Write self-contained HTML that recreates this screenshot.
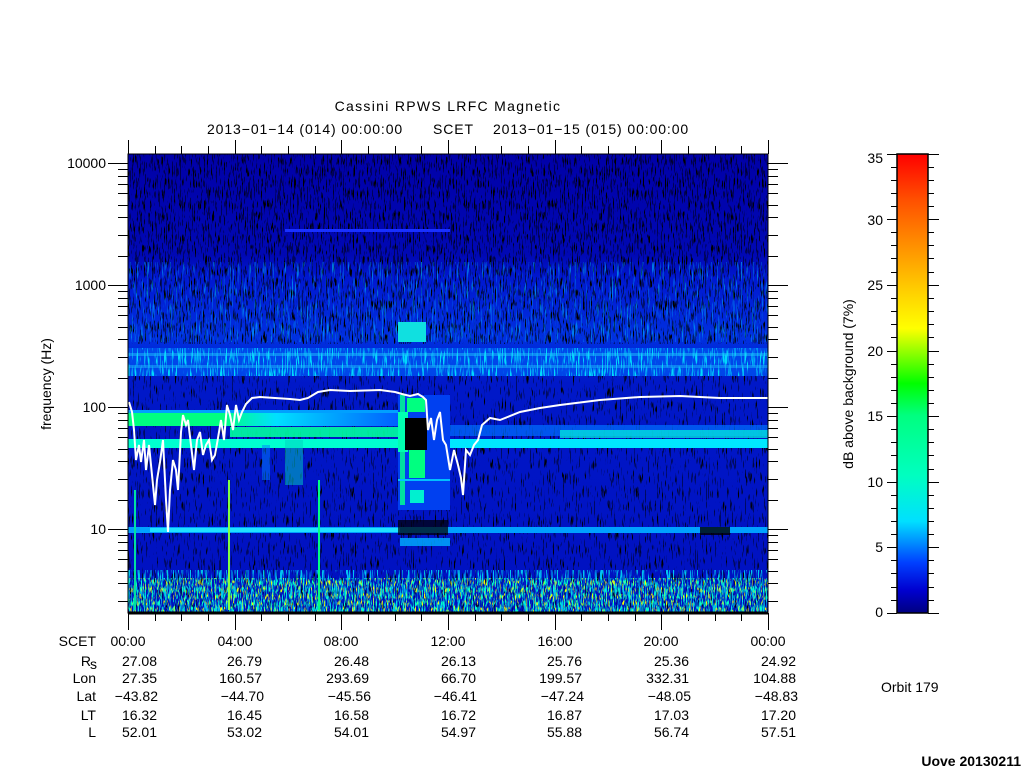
<!DOCTYPE html>
<html><head><meta charset="utf-8"><style>
html,body{margin:0;padding:0;background:#fff;width:1024px;height:768px;overflow:hidden}
svg{display:block}
text{font-family:"Liberation Sans","DejaVu Sans",sans-serif;font-size:14px;fill:#000}
</style></head><body>
<svg width="1024" height="768" viewBox="0 0 1024 768" xmlns="http://www.w3.org/2000/svg">
<defs>
<filter id="blk" x="0" y="0" width="100%" height="100%">
<feTurbulence type="fractalNoise" baseFrequency="0.9 0.09" numOctaves="2" seed="3"/>
<feColorMatrix type="matrix" values="0 0 0 0 0  0 0 0 0 0  0 0 0 0 0  9 0 0 0 -5.1"/>
</filter>
<filter id="blk2" x="0" y="0" width="100%" height="100%">
<feTurbulence type="fractalNoise" baseFrequency="0.9 0.07" numOctaves="2" seed="11"/>
<feColorMatrix type="matrix" values="0 0 0 0 0  0 0 0 0 0  0 0 0 0 0  9 0 0 0 -5.6"/>
</filter>
<filter id="cy" x="0" y="0" width="100%" height="100%">
<feTurbulence type="fractalNoise" baseFrequency="0.8 0.06" numOctaves="2" seed="5"/>
<feColorMatrix type="matrix" values="0 0 0 0 0  0 0 0 0 0.9  0 0 0 0 1  8 0 0 0 -4.3"/>
</filter>
<filter id="cy2" x="0" y="0" width="100%" height="100%">
<feTurbulence type="fractalNoise" baseFrequency="0.8 0.05" numOctaves="2" seed="9"/>
<feColorMatrix type="matrix" values="0 0 0 0 0  0 0 0 0 0.5  0 0 0 0 1  8 0 0 0 -4.8"/>
</filter>
<filter id="yl" x="0" y="0" width="100%" height="100%">
<feTurbulence type="fractalNoise" baseFrequency="0.9 0.15" numOctaves="2" seed="8"/>
<feColorMatrix type="matrix" values="0 0 0 0 0.9  0 0 0 0 1  0 0 0 0 0  9 0 0 0 -5.5"/>
</filter>
<filter id="gr" x="0" y="0" width="100%" height="100%">
<feTurbulence type="fractalNoise" baseFrequency="0.9 0.15" numOctaves="2" seed="21"/>
<feColorMatrix type="matrix" values="0 0 0 0 0  0 0 0 0 1  0 0 0 0 0.6  7 0 0 0 -3.6"/>
</filter>
<linearGradient id="bg" x1="0" y1="0" x2="0" y2="1">
<stop offset="0" stop-color="#0000a8"/>
<stop offset="0.22" stop-color="#0008b4"/>
<stop offset="0.27" stop-color="#0018d0"/>
<stop offset="0.40" stop-color="#0030e0"/>
<stop offset="0.50" stop-color="#0018c8"/>
<stop offset="1" stop-color="#0010c0"/>
</linearGradient>
<linearGradient id="cb" x1="0" y1="1" x2="0" y2="0">
<stop offset="0" stop-color="#000080"/>
<stop offset="0.05" stop-color="#0000d0"/>
<stop offset="0.11" stop-color="#0040ff"/>
<stop offset="0.2" stop-color="#00e0ff"/>
<stop offset="0.3" stop-color="#00ffc0"/>
<stop offset="0.43" stop-color="#00ff80"/>
<stop offset="0.5" stop-color="#00ff00"/>
<stop offset="0.62" stop-color="#ffff00"/>
<stop offset="0.7" stop-color="#ffd000"/>
<stop offset="0.8" stop-color="#ff9000"/>
<stop offset="0.9" stop-color="#ff5000"/>
<stop offset="1" stop-color="#ff0000"/>
</linearGradient>
<linearGradient id="fadeG" x1="0" y1="0" x2="1" y2="0">
<stop offset="0" stop-color="#00ff80"/>
<stop offset="0.35" stop-color="#00ff80"/>
<stop offset="0.55" stop-color="#00e0ff"/>
<stop offset="1" stop-color="#0060ff"/>
</linearGradient>
</defs>

<rect x="128" y="154" width="640" height="459" fill="url(#bg)"/>
<rect x="128" y="154" width="640" height="190" filter="url(#blk)"/>
<rect x="128" y="262" width="640" height="80" filter="url(#cy2)" opacity="0.6"/>
<rect x="285" y="229" width="165" height="3" fill="#1830ff"/>
<rect x="128" y="348" width="640" height="28" fill="#0050f0" opacity="0.8"/>
<rect x="128" y="348" width="640" height="28" filter="url(#cy)" opacity="0.85"/>
<rect x="128" y="353" width="640" height="3" fill="#20d0ff" opacity="0.45"/>
<rect x="128" y="365" width="640" height="3" fill="#20d0ff" opacity="0.4"/>
<rect x="398" y="322" width="28" height="20" fill="#10e0e0"/>
<rect x="128" y="376" width="640" height="237" filter="url(#blk2)"/>
<rect x="128" y="412" width="270" height="14" fill="url(#fadeG)"/>
<rect x="128" y="410" width="270" height="3" fill="#00a0ff"/>
<rect x="230" y="427" width="170" height="10" fill="#00ffa0" opacity="0.9"/>
<rect x="450" y="425" width="318" height="11" fill="#0070ff" opacity="0.7"/>
<rect x="128" y="439" width="270" height="9" fill="#00ffd0"/>
<rect x="450" y="439" width="318" height="9" fill="#00e8ff"/>
<rect x="560" y="430" width="208" height="8" fill="#00e0e0" opacity="0.8"/>
<rect x="285" y="440" width="18" height="45" fill="#00d0c0" opacity="0.5"/>
<rect x="262" y="445" width="8" height="35" fill="#0080ff" opacity="0.5"/>
<rect x="398" y="395" width="52" height="115" fill="#0040f0"/>
<rect x="400" y="395" width="5" height="110" fill="#00e0a0"/>
<rect x="407" y="398" width="18" height="14" fill="#00ff80"/>
<rect x="398" y="412" width="10" height="40" fill="#00ffb0"/>
<rect x="405" y="418" width="22" height="32" fill="#000"/>
<rect x="409" y="450" width="16" height="28" fill="#00ff80"/>
<rect x="398" y="479" width="52" height="2" fill="#00c0ff"/>
<rect x="410" y="490" width="14" height="13" fill="#00f0d0"/>
<rect x="128" y="527" width="640" height="6" fill="#00a0ff"/>
<rect x="150" y="528" width="250" height="4" fill="#20e0ff"/>
<rect x="398" y="520" width="50" height="15" fill="#000" opacity="0.7"/>
<rect x="400" y="538" width="50" height="8" fill="#00b0ff" opacity="0.8"/>
<rect x="700" y="527" width="30" height="8" fill="#000" opacity="0.8"/>
<rect x="128" y="570" width="640" height="43" filter="url(#cy)" opacity="0.8"/>
<rect x="128" y="578" width="640" height="35" filter="url(#gr)"/>
<rect x="128" y="578" width="640" height="35" filter="url(#yl)"/>
<rect x="318" y="480" width="2" height="130" fill="#00ff80"/>
<rect x="228" y="480" width="2" height="130" fill="#80ff40"/>
<rect x="134" y="490" width="2" height="120" fill="#00e0a0"/>

<polyline fill="none" stroke="#fff" stroke-width="2" points="129,402 132,412 134,430 136,460 139,445 141,462 144,440 146,470 149,445 152,475 155,505 157,480 160,462 163,440 166,500 168,532 170,490 173,460 176,470 178,490 181,432 183,415 186,425 188,420 191,445 194,470 197,440 200,432 203,455 206,445 209,440 212,460 215,455 218,438 221,420 224,440 227,405 230,415 233,430 236,405 239,420 242,412 246,404 252,398 260,397 275,398 290,399 300,400 308,398 318,392 330,390 350,391 380,390 395,392 402,394 410,396 418,394 423,397 426,400 428,430 431,418 434,440 437,420 440,412 443,440 446,445 450,470 454,450 458,465 461,478 463,495 466,450 470,455 474,445 478,440 482,425 490,418 500,420 520,412 540,408 560,405 600,400 640,397 680,396 720,398 768,398"/>

<rect x="128" y="154" width="640" height="459" fill="none" stroke="#000" stroke-width="1"/>
<line x1="128" y1="613" x2="768" y2="613" stroke="#000" stroke-width="3"/>
<g stroke="#000" stroke-width="1">
<path d="M128.5 140v14M235.5 140v14M341.5 140v14M448.5 140v14M555.5 140v14M661.5 140v14M768.5 140v14
M128.5 613v17M235.5 613v17M341.5 613v17M448.5 613v17M555.5 613v17M661.5 613v17M768.5 613v17
M155.5 146v8M181.5 146v8M208.5 146v8M261.5 146v8M288.5 146v8M315.5 146v8M368.5 146v8M395.5 146v8M421.5 146v8M475.5 146v8M501.5 146v8M528.5 146v8M581.5 146v8M608.5 146v8M635.5 146v8M688.5 146v8M715.5 146v8M741.5 146v8
M155.5 613v8M181.5 613v8M208.5 613v8M261.5 613v8M288.5 613v8M315.5 613v8M368.5 613v8M395.5 613v8M421.5 613v8M475.5 613v8M501.5 613v8M528.5 613v8M581.5 613v8M608.5 613v8M635.5 613v8M688.5 613v8M715.5 613v8M741.5 613v8"/>
<path d="M108 163.5h20M108 285.5h20M108 407.5h20M108 529.5h20M768 163.5h20M768 285.5h20M768 407.5h20M768 529.5h20
M118 169.5h10M118 176.5h10M118 184.5h10M118 193.5h10M118 205.5h10M118 217.5h10M118 235.5h10M118 256.5h10
M118 291.5h10M118 298.5h10M118 306.5h10M118 315.5h10M118 327.5h10M118 339.5h10M118 357.5h10M118 378.5h10
M118 413.5h10M118 420.5h10M118 428.5h10M118 437.5h10M118 449.5h10M118 461.5h10M118 479.5h10M118 500.5h10
M118 535.5h10M118 542.5h10M118 550.5h10M118 559.5h10M118 571.5h10M118 583.5h10M118 601.5h10
M768 169.5h10M768 176.5h10M768 184.5h10M768 193.5h10M768 205.5h10M768 217.5h10M768 235.5h10M768 256.5h10
M768 291.5h10M768 298.5h10M768 306.5h10M768 315.5h10M768 327.5h10M768 339.5h10M768 357.5h10M768 378.5h10
M768 413.5h10M768 420.5h10M768 428.5h10M768 437.5h10M768 449.5h10M768 461.5h10M768 479.5h10M768 500.5h10
M768 535.5h10M768 542.5h10M768 550.5h10M768 559.5h10M768 571.5h10M768 583.5h10M768 601.5h10"/>
</g>

<text x="448" y="111" text-anchor="middle" font-size="17" letter-spacing="1.3">Cassini RPWS LRFC Magnetic</text>
<text x="207" y="134" letter-spacing="0.9">2013−01−14 (014) 00:00:00</text>
<text x="433" y="134" letter-spacing="0.9">SCET</text>
<text x="493" y="134" letter-spacing="0.9">2013−01−15 (015) 00:00:00</text>
<g text-anchor="end">
<text x="106" y="168">10000</text>
<text x="106" y="290">1000</text>
<text x="106" y="412">100</text>
<text x="106" y="534">10</text>
</g>
<text transform="translate(51,384) rotate(-90)" text-anchor="middle">frequency (Hz)</text>

<g text-anchor="end">
<text x="96" y="646">SCET</text>
<text x="91" y="666">R</text><text x="97" y="669" font-size="9">s</text>
<text x="96" y="683">Lon</text>
<text x="96" y="701">Lat</text>
<text x="96" y="720">LT</text>
<text x="96" y="737">L</text>
</g>
<g text-anchor="middle">
<text x="128" y="646">00:00</text><text x="235" y="646">04:00</text><text x="341" y="646">08:00</text><text x="448" y="646">12:00</text><text x="555" y="646">16:00</text><text x="661" y="646">20:00</text><text x="768" y="646">00:00</text>
</g>
<g text-anchor="end">
<text x="157" y="666">27.08</text><text x="262" y="666">26.79</text><text x="369" y="666">26.48</text><text x="476" y="666">26.13</text><text x="582" y="666">25.76</text><text x="689" y="666">25.36</text><text x="796" y="666">24.92</text>
<text x="157" y="683">27.35</text><text x="262" y="683">160.57</text><text x="369" y="683">293.69</text><text x="476" y="683">66.70</text><text x="582" y="683">199.57</text><text x="689" y="683">332.31</text><text x="796" y="683">104.88</text>
<text x="158" y="701">−43.82</text><text x="264" y="701">−44.70</text><text x="371" y="701">−45.56</text><text x="477" y="701">−46.41</text><text x="584" y="701">−47.24</text><text x="691" y="701">−48.05</text><text x="798" y="701">−48.83</text>
<text x="157" y="720">16.32</text><text x="262" y="720">16.45</text><text x="369" y="720">16.58</text><text x="476" y="720">16.72</text><text x="582" y="720">16.87</text><text x="689" y="720">17.03</text><text x="796" y="720">17.20</text>
<text x="157" y="737">52.01</text><text x="262" y="737">53.02</text><text x="369" y="737">54.01</text><text x="476" y="737">54.97</text><text x="582" y="737">55.88</text><text x="689" y="737">56.74</text><text x="796" y="737">57.51</text>
</g>
<text x="881" y="692">Orbit 179</text>
<text x="1021" y="766" text-anchor="end" font-size="7" font-weight="bold">Uove 20130211</text>

<rect x="897" y="154" width="31" height="459" fill="url(#cb)" stroke="#000" stroke-width="1.5"/>
<g stroke="#000" stroke-width="1">
<path d="M887 154.5h10M928 154.5h11M887 219.5h10M928 219.5h11M887 285.5h10M928 285.5h11M887 351.5h10M928 351.5h11M887 416.5h10M928 416.5h11M887 482.5h10M928 482.5h11M887 547.5h10M928 547.5h11M887 613.5h10M928 613.5h11
M891 167.5h6M928 167.5h6M891 180.5h6M928 180.5h6M891 193.5h6M928 193.5h6M891 206.5h6M928 206.5h6
M891 232.5h6M928 232.5h6M891 245.5h6M928 245.5h6M891 258.5h6M928 258.5h6M891 272.5h6M928 272.5h6
M891 298.5h6M928 298.5h6M891 311.5h6M928 311.5h6M891 324.5h6M928 324.5h6M891 337.5h6M928 337.5h6
M891 364.5h6M928 364.5h6M891 377.5h6M928 377.5h6M891 390.5h6M928 390.5h6M891 403.5h6M928 403.5h6
M891 429.5h6M928 429.5h6M891 442.5h6M928 442.5h6M891 455.5h6M928 455.5h6M891 469.5h6M928 469.5h6
M891 495.5h6M928 495.5h6M891 508.5h6M928 508.5h6M891 521.5h6M928 521.5h6M891 534.5h6M928 534.5h6
M891 560.5h6M928 560.5h6M891 573.5h6M928 573.5h6M891 587.5h6M928 587.5h6M891 600.5h6M928 600.5h6"/>
</g>
<g text-anchor="end">
<text x="883" y="163">35</text><text x="883" y="225">30</text><text x="883" y="290">25</text><text x="883" y="356">20</text><text x="883" y="421">15</text><text x="883" y="487">10</text><text x="883" y="552">5</text><text x="883" y="617">0</text>
</g>
<text transform="translate(853,384) rotate(-90)" text-anchor="middle">dB above background (7%)</text>
</svg>
</body></html>
